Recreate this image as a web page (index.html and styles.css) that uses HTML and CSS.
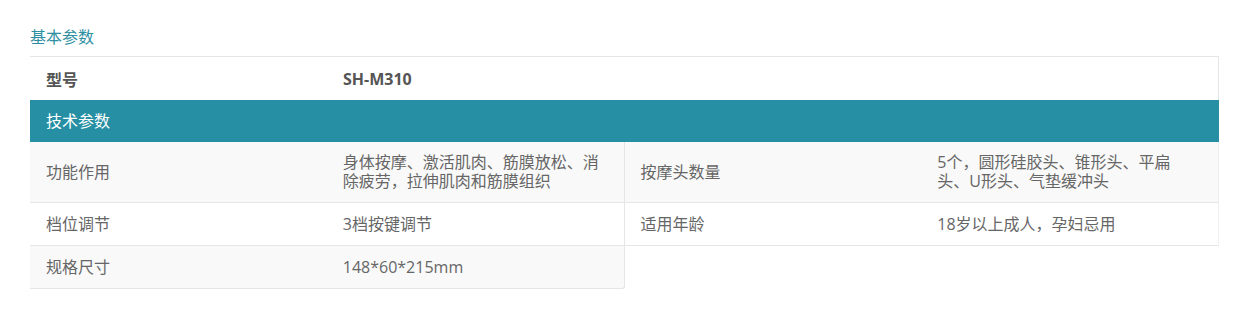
FILE: index.html
```html
<!DOCTYPE html>
<html lang="zh-CN">
<head>
<meta charset="UTF-8" />
<title>基本参数</title>
<meta name="viewport" content="width=device-width, initial-scale=1.0">
<link rel="stylesheet" href="styles.css">
</head>
<body>

  <div class="params">
    <h3 class="params-title">基本参数</h3>

    <div class="params-box">
      <div class="model-row">
        <span class="model-label">型号</span>
        <span class="model-value">SH-M310</span>
      </div>

      <div class="section-bar">技术参数</div>

      <div class="spec-grid">
        <div class="spec-item left odd">
          <span class="spec-label">功能作用</span>
          <span class="spec-value">身体按摩、激活肌肉、筋膜放松、消除疲劳，拉伸肌肉和筋膜组织</span>
        </div>
        <div class="spec-item right odd">
          <span class="spec-label">按摩头数量</span>
          <span class="spec-value">5个，圆形硅胶头、锥形头、平扁头、U形头、气垫缓冲头</span>
        </div>
        <div class="spec-item left">
          <span class="spec-label">档位调节</span>
          <span class="spec-value">3档按键调节</span>
        </div>
        <div class="spec-item right">
          <span class="spec-label">适用年龄</span>
          <span class="spec-value">18岁以上成人，孕妇忌用</span>
        </div>
        <div class="spec-item left odd last">
          <span class="spec-label">规格尺寸</span>
          <span class="spec-value">148*60*215mm</span>
        </div>
      </div>
    </div>
  </div>

</body>
</html>
```

FILE: styles.css
```css
body {
  margin: 0;
  padding: 0;
  background-color: #ffffff;
  font-family: "Open Sans", "Noto Sans CJK SC", sans-serif;
  font-size: 16px;
  color: #666;
}
.params {
  width: 1189px;
  padding: 0 0 0 30px;
}
.params-title {
  margin: 0;
  padding: 25px 0 7px 0;
  font-size: 16px;
  font-weight: normal;
  line-height: 24px;
  color: #2f8fa2;
}
.params-box {
  border-top: 1px solid #e6e6e6;
}
.model-row {
  display: grid;
  grid-template-columns: 1fr 3fr;
  align-items: center;
  height: 43px;
  border-right: 1px solid #e6e6e6;
  font-weight: bold;
  color: #555;
}
.model-row span {
  padding: 0 16px;
}
.section-bar {
  padding: 12px 16px;
  line-height: 18px;
  background-color: #268fa3;
  color: #fff;
}
.spec-grid {
  display: grid;
  grid-template-columns: 1fr 1fr;
}
.spec-item {
  box-sizing: border-box;
  min-height: 43px;
  display: grid;
  grid-template-columns: 1fr 1fr;
  align-items: center;
  border-bottom: 1px solid #e6e6e6;
  border-right: 1px solid #e6e6e6;
  line-height: 19px;
}
.spec-item.odd {
  background-color: #f9f9f9;
}
.spec-item.right {
  border-right-color: #f0f0f0;
}
.spec-item.right .spec-value {
  padding-right: 36px;
}
.spec-item.last {
  border-bottom-right-radius: 3px;
}
.spec-label,
.spec-value {
  padding: 11px 16px;
}
```
